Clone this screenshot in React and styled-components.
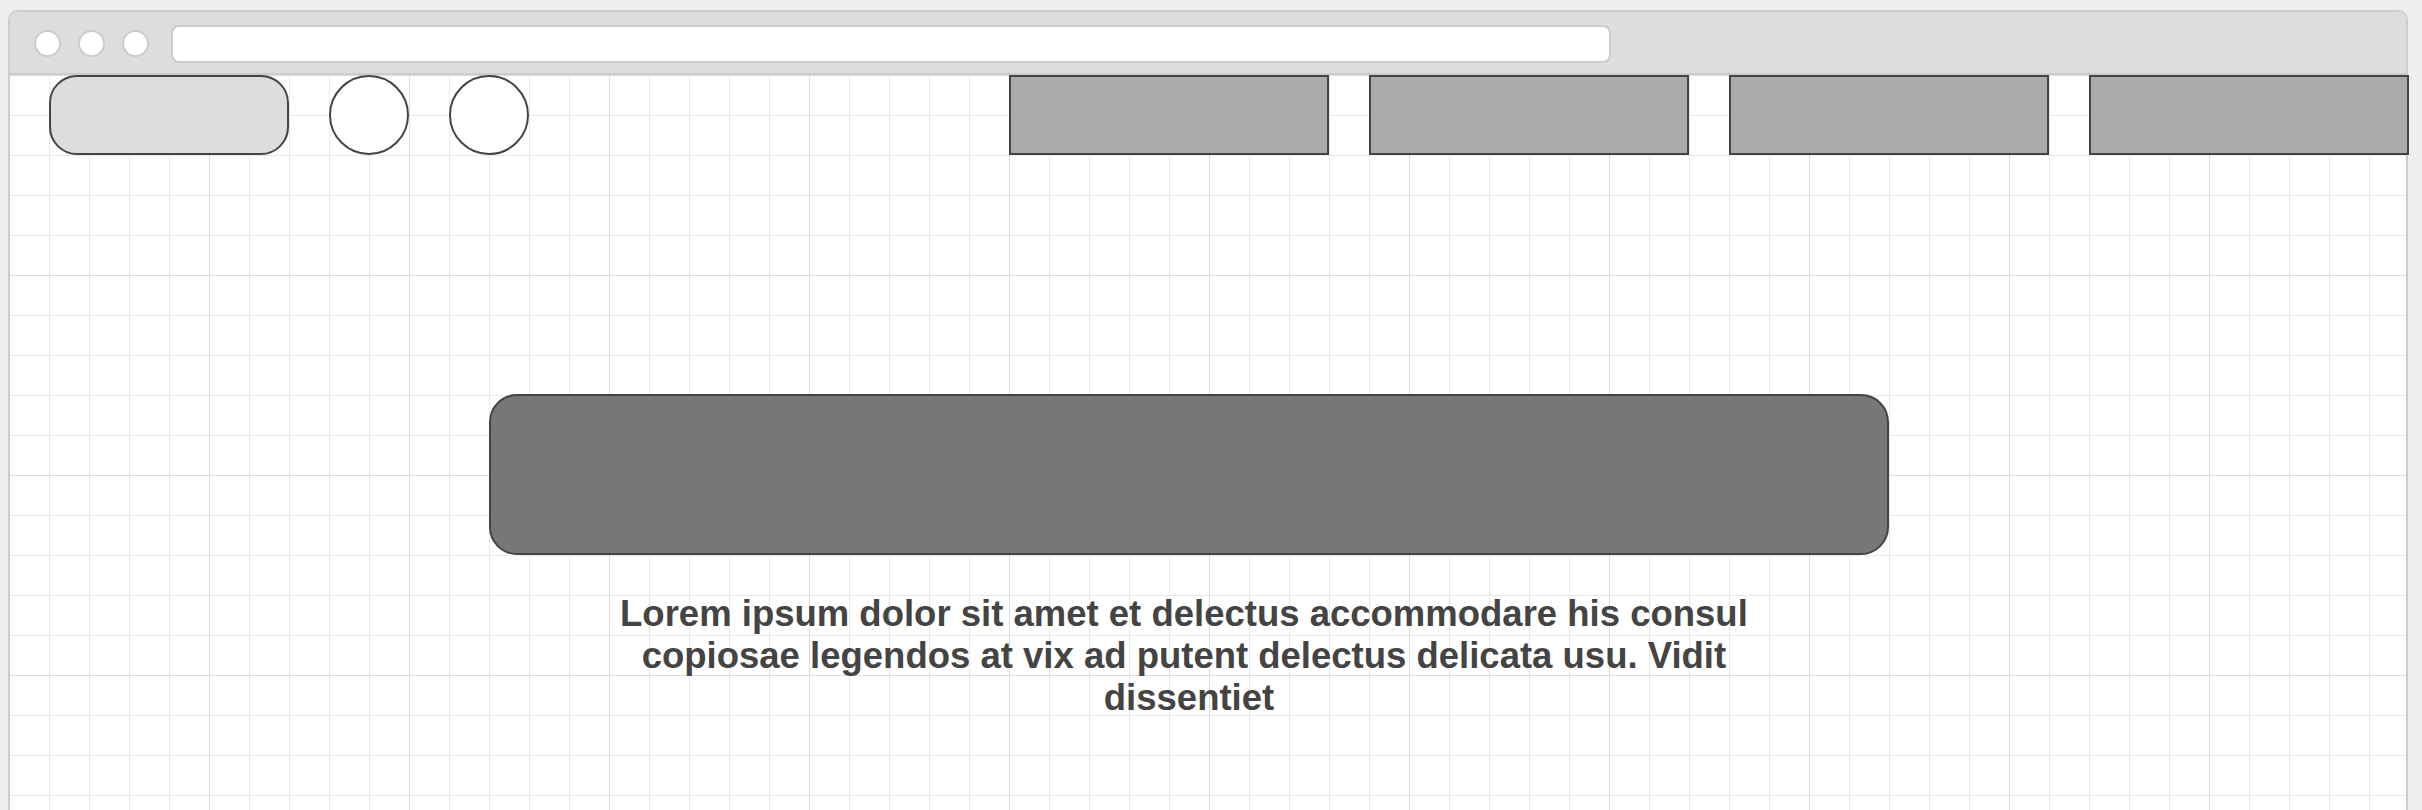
import React from "react"
import styled, { createGlobalStyle } from "styled-components"

const GlobalStyle = createGlobalStyle`
    html, body {
        margin: 0;
        padding: 0;
        overflow: hidden;
        background-color: #eeeeee;
    }
    body {
        font-family: "Liberation Sans", Arial, sans-serif;
    }
`
const Page = styled.div`
    padding: 10px 0 0 8px;
`
const BrowserFrame = styled.div`
    width: 2400px;
    height: 830px;
    box-sizing: border-box;
    border: 2px solid #cccccc;
    border-bottom: none;
    border-radius: 10px 10px 0 0;
    background-color: #ffffff;
    display: flex;
    flex-direction: column;
`
const TitleBar = styled.div`
    height: 63px;
    box-sizing: border-box;
    flex-shrink: 0;
    display: flex;
    align-items: center;
    padding: 2px 0 0 24px;
    background-color: #dddddd;
    border-bottom: 2px solid #cccccc;
    border-radius: 8px 8px 0 0;
`
const Dots = styled.div`
    display: flex;
    gap: 17px;
`
const Dot = styled.span`
    width: 27px;
    height: 27px;
    box-sizing: border-box;
    border-radius: 50%;
    border: 2px solid #cccccc;
    background-color: #ffffff;
`
const AddressBar = styled.div`
    margin-left: 22px;
    width: 1440px;
    height: 38px;
    box-sizing: border-box;
    border: 2px solid #cccccc;
    border-radius: 8px;
    background-color: #ffffff;
`
const Canvas = styled.div`
    flex: 1;
    background-color: #ffffff;
    background-image:
        linear-gradient(to right, #dcdcdc 1px, transparent 1px),
        linear-gradient(to bottom, #dcdcdc 1px, transparent 1px),
        linear-gradient(to right, #e9e9e9 1px, transparent 1px),
        linear-gradient(to bottom, #e9e9e9 1px, transparent 1px);
    background-size: 200px 200px, 200px 200px, 40px 40px, 40px 40px;
    background-position: -1px 0;
`
const TopRow = styled.div`
    display: flex;
    height: 80px;
    padding-left: 39px;
`
const Group = styled.div`
    display: flex;
    gap: 40px;
    flex-shrink: 0;
    margin-left: ${(p) => p.$offset || 0}px;
`
const Pill = styled.div`
    width: 240px;
    height: 80px;
    box-sizing: border-box;
    border: 2px solid #444444;
    border-radius: 28px;
    background-color: #dddddd;
`
const Circle = styled.div`
    width: 80px;
    height: 80px;
    box-sizing: border-box;
    border: 2px solid #444444;
    border-radius: 50%;
    background-color: #ffffff;
`
const NavBox = styled.div`
    width: 320px;
    height: 80px;
    flex-shrink: 0;
    box-sizing: border-box;
    border: 2px solid #444444;
    background-color: #aaaaaa;
`
const Hero = styled.div`
    margin: 239px 0 0 479px;
    width: 1400px;
    height: 161px;
    box-sizing: border-box;
    border: 2px solid #444444;
    border-radius: 28px;
    background-color: #777777;
`
const Caption = styled.p`
    margin: 38px 0 0 579px;
    width: 1200px;
    font-family: "Liberation Sans", Arial, sans-serif;
    font-weight: bold;
    font-size: 36.5px;
    line-height: 42px;
    color: #444444;
    text-align: center;
    white-space: break-spaces;
`

function App() {
    return (
        <Page>
            <GlobalStyle />
            <BrowserFrame>
                <TitleBar>
                    <Dots>
                        <Dot />
                        <Dot />
                        <Dot />
                    </Dots>
                    <AddressBar />
                </TitleBar>
                <Canvas>
                    <TopRow>
                        <Group>
                            <Pill />
                            <Circle />
                            <Circle />
                        </Group>
                        <Group $offset={480}>
                            <NavBox />
                            <NavBox />
                            <NavBox />
                            <NavBox />
                        </Group>
                    </TopRow>
                    <Hero />
                    <Caption>
                        Lorem ipsum dolor sit amet et delectus accommodare his consul copiosae legendos at vix ad putent delectus delicata usu. Vidit dissentiet
                    </Caption>
                </Canvas>
            </BrowserFrame>
        </Page>
    )
}

export default App;
